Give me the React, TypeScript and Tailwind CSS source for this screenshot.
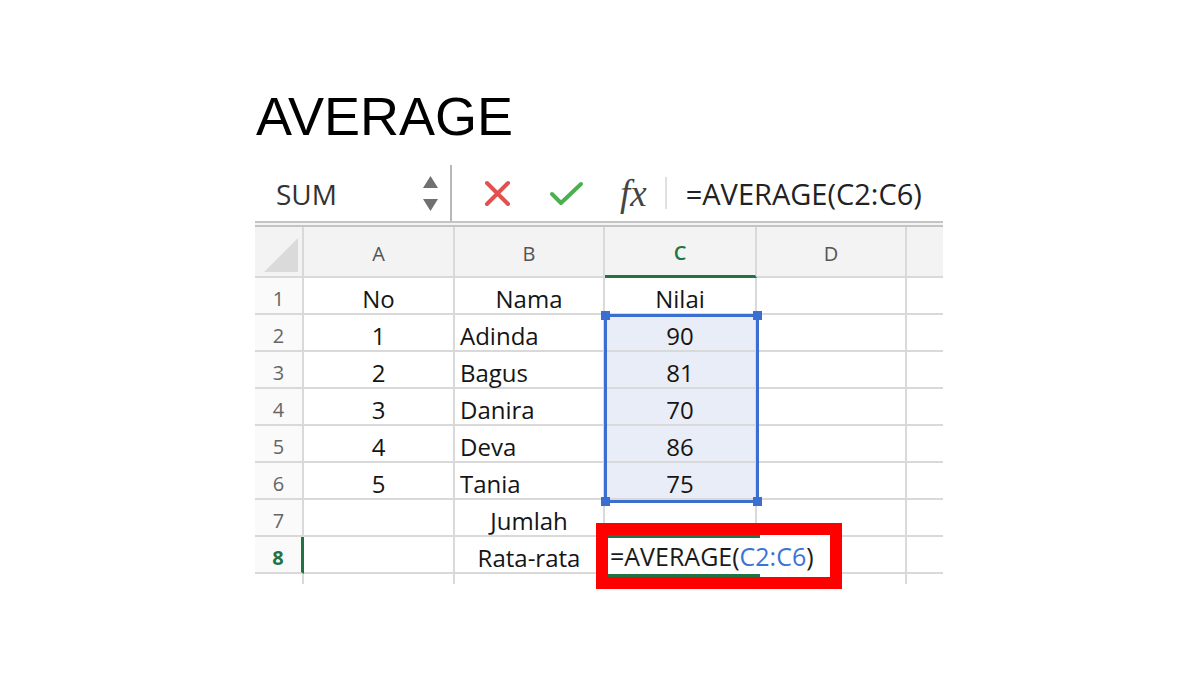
import React from 'react';

const cellFont = { fontFamily: '"Open Sans", "Liberation Sans", sans-serif' };

type Row = { a: string; b: string; c: string; bAlign: 'left' | 'center' };

const rows: Row[] = [
  { a: 'No', b: 'Nama', c: 'Nilai', bAlign: 'center' },
  { a: '1', b: 'Adinda', c: '90', bAlign: 'left' },
  { a: '2', b: 'Bagus', c: '81', bAlign: 'left' },
  { a: '3', b: 'Danira', c: '70', bAlign: 'left' },
  { a: '4', b: 'Deva', c: '86', bAlign: 'left' },
  { a: '5', b: 'Tania', c: '75', bAlign: 'left' },
  { a: '', b: 'Jumlah', c: '', bAlign: 'center' },
  { a: '', b: 'Rata-rata', c: '', bAlign: 'center' },
];

const FormulaBar: React.FC = () => (
  <div className="flex h-[56px] items-center bg-white" style={cellFont}>
    <div className="flex h-full w-[197px] items-center justify-between border-r-2 border-[#b8b8b8] pl-[21px] pr-[11px]">
      <span className="pt-[1px] text-[28px] leading-none text-[#333]">SUM</span>
      <svg width="17" height="40" viewBox="0 0 17 40">
        <polygon points="8.5,3 16,15 1,15" fill="#707070" />
        <polygon points="1,26 16,26 8.5,38" fill="#707070" />
      </svg>
    </div>
    <svg className="ml-[32px]" width="27" height="27" viewBox="0 0 27 27">
      <path d="M3 3 L24 24 M24 3 L3 24" stroke="#e05252" strokeWidth="4" strokeLinecap="round" />
    </svg>
    <svg className="ml-[38px]" width="35" height="27" viewBox="0 0 35 27">
      <path d="M3 14 L12 23 L32 4" stroke="#4caf50" strokeWidth="4" fill="none" strokeLinecap="round" strokeLinejoin="round" />
    </svg>
    <span
      className="ml-[36px] text-[37px] italic leading-none text-[#444]"
      style={{ fontFamily: '"Liberation Serif", serif' }}
    >
      fx
    </span>
    <div className="ml-[18px] h-[32px] w-[2px] bg-[#e0e0e0]" />
    <span className="ml-[19px] pt-[1px] text-[29px] leading-none text-[#222]">=AVERAGE(C2:C6)</span>
  </div>
);

const App: React.FC = () => {
  const line = 'border-[#d9d9d9]';
  return (
    <div className="h-[675px] w-[1200px] overflow-hidden bg-white pl-[256px] pt-[89px]">
      <h1 className="text-[54px] leading-none text-black" style={{ fontFamily: '"Liberation Sans", Arial, sans-serif' }}>
        AVERAGE
      </h1>

      <div className="-ml-[1px] mt-[22px] w-[688px]">
        <FormulaBar />
        <div className="h-[6px] border-y-2 border-[#c4c4c4] bg-[#f4f4f4]" />

        <div className="relative grid grid-cols-[49px_151px_150px_152px_150px_36px]" style={cellFont}>
          {/* header row */}
          <div className={`relative h-[51px] border-r-2 border-b-2 ${line} bg-[#f3f3f3]`}>
            <svg className="absolute right-[4px] bottom-[4px]" width="34" height="34" viewBox="0 0 34 34">
              <polygon points="34,0 34,34 0,34" fill="#dadada" />
            </svg>
          </div>
          {['A', 'B', 'C', 'D', ''].map((h, i) => (
            <div
              key={i}
              className={`flex h-[51px] items-center justify-center bg-[#f3f3f3] pt-[4px] text-[20px] ${
                i < 4 ? 'border-r-2' : ''
              } ${h === 'C' ? 'border-b-[3px] border-b-[#217346] font-semibold text-[#217346]' : `border-b-2 text-[#555]`} ${line}`}
            >
              {h}
            </div>
          ))}

          {rows.map((r, i) => {
            const n = i + 1;
            const sel = n >= 2 && n <= 6;
            const active = n === 8;
            return (
              <React.Fragment key={n}>
                <div
                  className={`flex h-[37px] items-center justify-center border-b-2 pt-[6px] text-[20px] ${line} ${
                    active ? 'border-r-[3px] border-r-[#217346] font-bold text-[#217346]' : 'border-r-2 text-[#666]'
                  } bg-[#fafafa]`}
                >
                  {n}
                </div>
                <div className={`flex h-[37px] items-center justify-center border-r-2 border-b-2 ${line} pt-[6px] text-[24px] text-[#151515]`}>
                  {r.a}
                </div>
                <div
                  className={`flex h-[37px] items-center border-r-2 border-b-2 ${line} pt-[6px] text-[24px] text-[#151515] ${
                    r.bAlign === 'left' ? 'justify-start pl-[5px]' : 'justify-center'
                  }`}
                >
                  {r.b}
                </div>
                <div
                  className={`flex h-[37px] items-center justify-center border-r-2 border-b-2 ${line} pt-[6px] text-[24px] text-[#151515] ${
                    sel ? 'bg-[#e9edf7]' : ''
                  }`}
                >
                  {r.c}
                </div>
                <div className={`h-[37px] border-r-2 border-b-2 ${line}`} />
                <div className={`h-[37px] border-b-2 ${line}`} />
              </React.Fragment>
            );
          })}

          {/* tail of the sheet under row 8 */}
          <div className={`h-[10px] border-r-2 ${line}`} />
          <div className={`h-[10px] border-r-2 ${line}`} />
          <div className={`h-[10px] border-r-2 ${line}`} />
          <div className={`h-[10px] border-r-2 ${line}`} />
          <div className={`h-[10px] border-r-2 ${line}`} />
          <div className="h-[10px]" />

          {/* selection C2:C6 */}
          <div className="pointer-events-none absolute left-[349px] top-[87px] h-[189px] w-[155px] border-[3px] border-[#3a6fd0]">
            <div className="absolute -left-[6px] -top-[6px] h-[9px] w-[9px] bg-[#3a6fd0]" />
            <div className="absolute -right-[6px] -top-[6px] h-[9px] w-[9px] bg-[#3a6fd0]" />
            <div className="absolute -left-[6px] -bottom-[6px] h-[9px] w-[9px] bg-[#3a6fd0]" />
            <div className="absolute -right-[6px] -bottom-[6px] h-[9px] w-[9px] bg-[#3a6fd0]" />
          </div>

          {/* highlighted editing cell C8 */}
          <div className="absolute left-[341px] top-[296px] h-[66px] w-[246px] border-[12px] border-[#ff0000] bg-white">
            <div className="flex h-full flex-col justify-between">
              <div className="h-[3px] w-[152px] bg-[#217346]" />
              <div className="flex items-center pl-[2px] text-[25px] leading-none text-[#1a1a1a]">
                <span>=AVERAGE(</span>
                <span className="text-[#3a74d6]">C2:C6</span>
                <span>)</span>
              </div>
              <div className="h-[3px] w-[152px] bg-[#217346]" />
            </div>
          </div>
        </div>
      </div>
    </div>
  );
};

export default App;
